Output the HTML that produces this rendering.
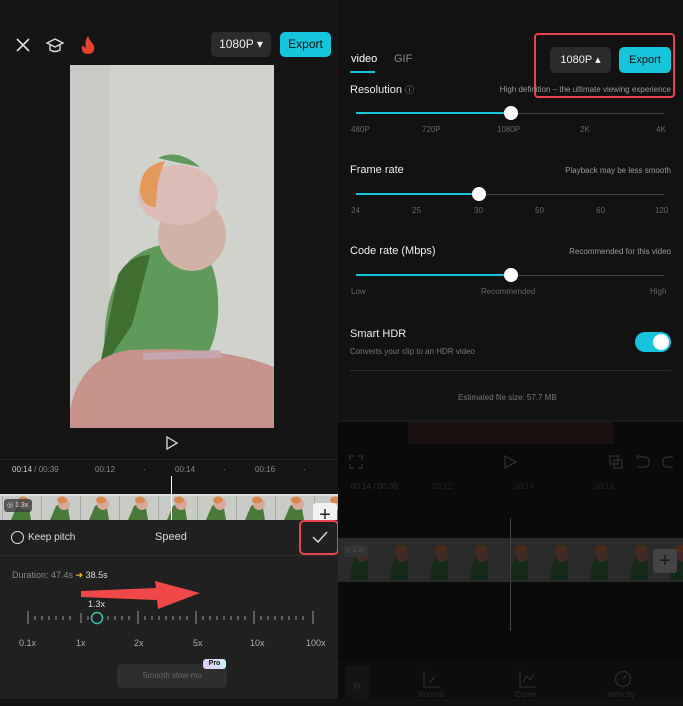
<!DOCTYPE html>
<html><head><meta charset="utf-8"><style>
*{margin:0;padding:0;box-sizing:border-box}
body{width:683px;height:699px;background:#111;font-family:"Liberation Sans",sans-serif;position:relative;overflow:hidden;color:#fff}
.a{position:absolute}
.t{font-size:8px;color:#888;position:absolute;white-space:nowrap}
</style></head><body>
<svg width="0" height="0" style="position:absolute"><defs>
<pattern id="th" x="3" y="0" width="39" height="24" patternUnits="userSpaceOnUse">
<rect width="39" height="24" fill="#c9ccc6"/><rect x="38" width="1" height="24" fill="#aaa"/>
<path d="M8 24 L14 10 Q20 6 26 12 L28 24Z" fill="#4a7a3a"/>
<ellipse cx="22" cy="8" rx="6" ry="6" fill="#d8a89a"/><ellipse cx="20" cy="4" rx="5" ry="3.5" fill="#d9884e"/>
</pattern>
<pattern id="th2" x="0" y="0" width="40" height="42" patternUnits="userSpaceOnUse">
<rect width="40" height="42" fill="#2a2b2a"/>
<path d="M10 42 L16 18 Q24 10 30 20 L30 42Z" fill="#15291a"/>
<ellipse cx="24" cy="14" rx="7" ry="8" fill="#3e2a26"/><ellipse cx="23" cy="9" rx="6" ry="4" fill="#4a2a1c"/>
</pattern>
</defs></svg>

<!-- LEFT PANEL -->
<div class="a" style="left:0;top:0;width:338px;height:699px;background:#151515"></div>
<svg class="a" style="left:15px;top:37px" width="16" height="16"><path d="M2 2L14 14M14 2L2 14" stroke="#ddd" stroke-width="1.6"/></svg>
<svg class="a" style="left:46px;top:36px" width="18" height="18"><path d="M9 3L17 7L9 11L1 7Z M4 9V14Q9 17 14 14V9" fill="none" stroke="#ddd" stroke-width="1.4"/></svg>
<svg class="a" style="left:80px;top:35px" width="16" height="20"><path d="M8 1Q10 6 13 9Q16 14 12 18Q8 20 4 18Q0 14 3 10Q4 13 6 12Q4 7 8 1Z" fill="#e8432e"/></svg>
<div class="a" style="left:211px;top:32px;width:60px;height:25px;background:#2a2b2d;border-radius:5px;font-size:12px;line-height:25px;text-align:center;color:#eee">1080P ▾</div>
<div class="a" style="left:280px;top:32px;width:51px;height:25px;background:#16c5dc;border-radius:5px;font-size:12px;line-height:25px;text-align:center;color:#111">Export</div>
<svg class="a" style="left:70px;top:65px" width="204" height="363">
<rect width="204" height="363" fill="#cfd2cd"/>
<rect width="40" height="363" fill="#c8cbc5"/>
<path d="M35 300 Q30 230 60 195 Q90 170 130 185 Q150 200 148 250 Q145 285 130 298 Z" fill="#5f9a5b"/>
<path d="M28 310 L48 210 Q60 190 80 190 L62 260 Z" fill="#3e6e30"/>
<ellipse cx="122" cy="170" rx="34" ry="36" fill="#d0b2a6"/>
<ellipse cx="108" cy="130" rx="40" ry="30" fill="#dcbcb4"/>
<path d="M70 122 Q72 100 95 96 Q86 115 86 142 Q70 142 70 122Z" fill="#e3995a"/>
<path d="M88 93 Q108 83 130 102 L110 98Z" fill="#5f9a5b"/>
<path d="M0 345 Q10 292 60 285 Q150 280 204 302 V363 H0Z" fill="#c69289"/>
<path d="M72 288 L150 285 L152 293 L74 295Z" fill="#c4a6b0"/>
</svg>
<svg class="a" style="left:165px;top:436px" width="14" height="14"><path d="M2 1L12 7L2 13Z" fill="none" stroke="#ddd" stroke-width="1.3"/></svg>
<div class="a" style="left:0;top:459px;width:338px;height:1px;background:#222"></div>
<div class="t" style="left:12px;top:465px;color:#ccc">00:14 <span style="color:#888">/ 00:39</span></div>
<div class="t" style="left:95px;top:465px">00:12</div><div class="t" style="left:143px;top:465px">·</div>
<div class="t" style="left:175px;top:465px">00:14</div><div class="t" style="left:223px;top:465px">·</div>
<div class="t" style="left:255px;top:465px">00:16</div><div class="t" style="left:303px;top:465px">·</div>
<div class="a" style="left:0;top:494px;width:338px;height:2px;background:#ddd"></div>
<div class="a" style="left:0;top:496px;width:338px;height:24px"><svg width="338" height="24"><rect width="338" height="24" fill="url(#th)"/></svg></div>
<div class="a" style="left:4px;top:499px;width:28px;height:13px;background:rgba(60,60,60,.8);border-radius:3px;font-size:7px;color:#ddd;line-height:13px;padding-left:3px">◎ 1.3x</div>
<div class="a" style="left:171px;top:476px;width:1px;height:44px;background:#fff"></div>
<div class="a" style="left:313px;top:503px;width:24px;height:20px;background:#f2f2f2;border-radius:3px;color:#222;font-size:20px;line-height:24px;text-align:center">+</div>
<!-- sheet -->
<div class="a" style="left:0;top:520px;width:338px;height:179px;background:#202020"></div>
<div class="a" style="left:11px;top:531px;width:13px;height:13px;border:1.3px solid #ddd;border-radius:50%"></div>
<div class="a" style="left:28px;top:532px;font-size:10px;color:#ddd">Keep pitch</div>
<div class="a" style="left:155px;top:531px;font-size:11px;color:#ddd">Speed</div>
<div class="a" style="left:299px;top:520px;width:40px;height:35px;border:2.5px solid #e8434a;border-radius:5px"></div>
<svg class="a" style="left:312px;top:531px" width="16" height="12"><path d="M1 6L6 11L15 1" fill="none" stroke="#ddd" stroke-width="1.4"/></svg>
<div class="a" style="left:0;top:555px;width:338px;height:1px;background:#2c2c2c"></div>
<div class="a" style="left:12px;top:570px;font-size:9px;color:#888">Duration: 47.4s <span style="color:#f2c12e">➔</span> <span style="color:#ddd">38.5s</span></div>
<svg class="a" style="left:80px;top:580px" width="125" height="30"><path d="M1 11L76 8L75 1L120 13L78 29L77 20L1 17Z" fill="#f04848"/></svg>
<div class="a" style="left:88px;top:599px;font-size:9px;color:#ddd">1.3x</div>
<svg class="a" style="left:25px;top:608px" width="295" height="20">
<g stroke="#999" stroke-width="1">
<path d="M3 3V16M56 5V15M113 3V16M171 3V16M229 3V16M288 3V16"/>
<path d="M10 8V12M17 8V12M24 8V12M31 8V12M38 8V12M45 8V12M63 8V12M70 8V12M83 8V12M90 8V12M97 8V12M104 8V12M120 8V12M127 8V12M134 8V12M141 8V12M148 8V12M155 8V12M162 8V12M178 8V12M185 8V12M192 8V12M199 8V12M206 8V12M213 8V12M220 8V12M236 8V12M243 8V12M250 8V12M257 8V12M264 8V12M271 8V12M278 8V12"/>
</g>
<circle cx="72" cy="10" r="5.5" fill="#202020" stroke="#3cc0b0" stroke-width="1.5"/>
</svg>
<div class="t" style="left:19px;top:638px;font-size:9px;color:#aaa">0.1x</div>
<div class="t" style="left:76px;top:638px;font-size:9px;color:#aaa">1x</div>
<div class="t" style="left:134px;top:638px;font-size:9px;color:#aaa">2x</div>
<div class="t" style="left:193px;top:638px;font-size:9px;color:#aaa">5x</div>
<div class="t" style="left:250px;top:638px;font-size:9px;color:#aaa">10x</div>
<div class="t" style="left:306px;top:638px;font-size:9px;color:#aaa">100x</div>
<div class="a" style="left:117px;top:664px;width:110px;height:24px;background:#2e2e2e;border-radius:5px;font-size:8px;color:#666;line-height:24px;text-align:center">Smooth slow-mo</div>
<div class="a" style="left:203px;top:659px;width:23px;height:10px;background:linear-gradient(90deg,#e6c8f8,#c8f0f8);border-radius:3px;font-size:7px;font-weight:bold;color:#111;line-height:10px;text-align:center">Pro</div>

<!-- RIGHT PANEL -->
<div class="a" style="left:338px;top:0;width:345px;height:420px;background:#121212"></div>
<div class="a" style="left:351px;top:53px;font-size:11px;color:#fff">video</div>
<div class="a" style="left:350px;top:71px;width:25px;height:2px;background:#16c5dc"></div>
<div class="a" style="left:394px;top:53px;font-size:11px;color:#888">GIF</div>
<div class="a" style="left:534px;top:33px;width:141px;height:65px;border:2.5px solid #e8434a;border-radius:4px"></div>
<div class="a" style="left:550px;top:47px;width:61px;height:26px;background:#2a2b2d;border-radius:5px;font-size:11px;line-height:26px;text-align:center;color:#eee">1080P ▴</div>
<div class="a" style="left:619px;top:47px;width:52px;height:26px;background:#16c5dc;border-radius:5px;font-size:11px;line-height:26px;text-align:center;color:#111">Export</div>
<div class="a" style="left:350px;top:83px;font-size:11px;color:#eee">Resolution <span style="font-size:9px;color:#999">ⓘ</span></div>
<div class="t" style="right:12px;top:85px;color:#999">High definition – the ultimate viewing experience</div>
<div class="a" style="left:356px;top:113px;width:308px;height:1px;background:#444"></div>
<div class="a" style="left:356px;top:112px;width:155px;height:2px;background:#16c5dc"></div>
<div class="a" style="left:504px;top:106px;width:14px;height:14px;background:#fff;border-radius:50%"></div>
<div class="t" style="left:351px;top:125px;color:#666">480P</div><div class="t" style="left:422px;top:125px;color:#666">720P</div><div class="t" style="left:497px;top:125px;color:#666">1080P</div><div class="t" style="left:580px;top:125px;color:#666">2K</div><div class="t" style="left:656px;top:125px;color:#666">4K</div>
<div class="a" style="left:350px;top:164px;font-size:11px;color:#eee">Frame rate</div>
<div class="t" style="right:12px;top:166px;color:#999">Playback may be less smooth</div>
<div class="a" style="left:356px;top:194px;width:308px;height:1px;background:#444"></div>
<div class="a" style="left:356px;top:193px;width:123px;height:2px;background:#16c5dc"></div>
<div class="a" style="left:472px;top:187px;width:14px;height:14px;background:#fff;border-radius:50%"></div>
<div class="t" style="left:351px;top:206px;color:#666">24</div><div class="t" style="left:412px;top:206px;color:#666">25</div><div class="t" style="left:474px;top:206px;color:#666">30</div><div class="t" style="left:535px;top:206px;color:#666">50</div><div class="t" style="left:596px;top:206px;color:#666">60</div><div class="t" style="left:655px;top:206px;color:#666">120</div>
<div class="a" style="left:350px;top:245px;font-size:11px;color:#eee">Code rate (Mbps)</div>
<div class="t" style="right:12px;top:247px;color:#999">Recommended for this video</div>
<div class="a" style="left:356px;top:275px;width:308px;height:1px;background:#444"></div>
<div class="a" style="left:356px;top:274px;width:155px;height:2px;background:#16c5dc"></div>
<div class="a" style="left:504px;top:268px;width:14px;height:14px;background:#fff;border-radius:50%"></div>
<div class="t" style="left:351px;top:287px;color:#666">Low</div><div class="t" style="left:481px;top:287px;color:#666">Recommended</div><div class="t" style="left:650px;top:287px;color:#666">High</div>
<div class="a" style="left:350px;top:328px;font-size:11px;color:#eee">Smart HDR</div>
<div class="t" style="left:350px;top:347px;color:#777">Converts your clip to an HDR video</div>
<div class="a" style="left:635px;top:332px;width:36px;height:20px;background:#16c5dc;border-radius:10px"></div>
<div class="a" style="left:653px;top:334px;width:16px;height:16px;background:#fff;border-radius:50%"></div>
<div class="a" style="left:350px;top:370px;width:321px;height:1px;background:#2a2a2a"></div>
<div class="t" style="left:458px;top:393px;color:#777">Estimated file size: 57.7 MB</div>
<!-- dimmed lower -->
<div class="a" style="left:338px;top:420px;width:345px;height:279px;background:#0a0a0a"></div>
<div class="a" style="left:338px;top:420px;width:345px;height:2px;background:#1a1a1a"></div>
<div class="a" style="left:408px;top:422px;width:205px;height:22px;background:#1a1211"></div>
<svg class="a" style="left:349px;top:455px" width="14" height="14"><path d="M1 5V1H5M9 1H13V5M13 9V13H9M5 13H1V9" fill="none" stroke="#2e2e2e" stroke-width="1.3"/></svg>
<svg class="a" style="left:504px;top:455px" width="13" height="14"><path d="M1 1L12 7L1 13Z" fill="none" stroke="#2e2e2e" stroke-width="1.3"/></svg>
<svg class="a" style="left:609px;top:454px" width="66" height="16" fill="none" stroke="#2e2e2e" stroke-width="1.3"><rect x="1" y="2" width="8" height="8"/><rect x="5" y="6" width="8" height="8"/><path d="M30 3H36Q40 3 40 8Q40 13 36 13H28M30 1L28 3L30 5"/><path d="M64 3H58Q54 3 54 8Q54 13 58 13H64"/></svg>
<div class="t" style="left:351px;top:482px;color:#2e2e2e">00:14 / 00:39</div>
<div class="t" style="left:432px;top:482px;color:#222">00:12</div><div class="t" style="left:514px;top:482px;color:#222">00:14</div><div class="t" style="left:594px;top:482px;color:#222">00:16</div>
<div class="a" style="left:338px;top:538px;width:345px;height:2px;background:#2a2a2a"></div>
<div class="a" style="left:338px;top:540px;width:345px;height:42px"><svg width="345" height="42"><rect width="345" height="42" fill="url(#th2)"/></svg></div>
<div class="a" style="left:338px;top:580px;width:345px;height:2px;background:#2a2a2a"></div>
<div class="a" style="left:344px;top:545px;width:24px;height:12px;background:#333;border-radius:2px;font-size:6px;color:#555;line-height:12px;padding-left:2px">◎ 1.3x</div>
<div class="a" style="left:653px;top:549px;width:24px;height:24px;background:#444;border-radius:3px;color:#1a1a1a;font-size:20px;line-height:24px;text-align:center">+</div>
<div class="a" style="left:510px;top:518px;width:1px;height:113px;background:#444"></div>
<div class="a" style="left:338px;top:660px;width:345px;height:39px;background:#0d0d0d"></div>
<div class="a" style="left:345px;top:666px;width:25px;height:33px;background:#141414;border-radius:3px;color:#2a2a2a;font-size:16px;text-align:center;line-height:40px">«</div>
<svg class="a" style="left:423px;top:670px" width="18" height="18" fill="none" stroke="#2a2a2a" stroke-width="1.3"><path d="M1 1V17H17M6 13L12 7"/></svg>
<div class="t" style="left:418px;top:690px;color:#2a2a2a">Normal</div>
<svg class="a" style="left:519px;top:670px" width="18" height="18" fill="none" stroke="#2a2a2a" stroke-width="1.3"><path d="M1 1V17H17M4 12L8 6L11 10L15 4"/></svg>
<div class="t" style="left:515px;top:690px;color:#2a2a2a">Curve</div>
<svg class="a" style="left:614px;top:670px" width="18" height="18" fill="none" stroke="#2a2a2a" stroke-width="1.3"><circle cx="9" cy="9" r="7.5"/><path d="M9 9L12 5"/></svg>
<div class="t" style="left:607px;top:690px;color:#2a2a2a">Velocity</div>
</body></html>
